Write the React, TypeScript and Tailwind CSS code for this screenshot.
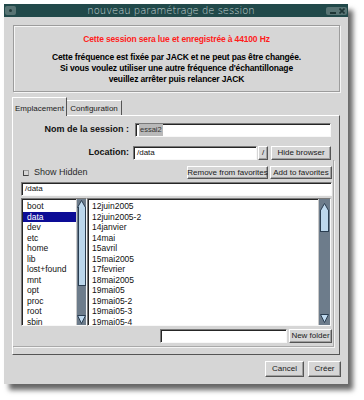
import React from "react";

const dirs = ["boot", "data", "dev", "etc", "home", "lib", "lost+found", "mnt", "opt", "proc", "root", "sbin"];
const files = [
  "12juin2005",
  "12juin2005-2",
  "14janvier",
  "14mai",
  "15avril",
  "15mai2005",
  "17fevrier",
  "18mai2005",
  "19mai05",
  "19mai05-2",
  "19mai05-3",
  "19mai05-4",
];

function Btn({ className = "", children }: { className?: string; children: React.ReactNode }) {
  return (
    <div
      className={`h-full shrink-0 flex items-center justify-center bg-[#d6d6d6] border border-t-white border-l-white border-r-[#555] border-b-[#555] shadow-[inset_-1px_-1px_0_#a0a0a0] text-[8px] text-[#1a1a1a] whitespace-nowrap ${className}`}
    >
      {children}
    </div>
  );
}

function Entry({ className = "", children }: { className?: string; children?: React.ReactNode }) {
  return (
    <div
      className={`h-full shrink-0 bg-white border border-t-[#7a7a7a] border-l-[#7a7a7a] border-r-[#f8f8f8] border-b-[#f8f8f8] shadow-[inset_1px_1px_0_#262626] flex items-center pl-[3px] text-[8px] text-[#111] overflow-hidden whitespace-nowrap ${className}`}
    >
      {children}
    </div>
  );
}

function UpArrow() {
  return (
    <svg width="9" height="8" viewBox="0 0 9 8" className="shrink-0">
      <polygon points="4.5,0.5 8.5,7.5 0.5,7.5" fill="#bfd9ee" stroke="#2a3d50" strokeWidth="1" />
    </svg>
  );
}

function DownArrow() {
  return (
    <svg width="9" height="9" viewBox="0 0 9 9" className="shrink-0">
      <polygon points="0.5,0.5 8.5,0.5 4.5,8.5" fill="#bfd9ee" stroke="#2a3d50" strokeWidth="1" />
    </svg>
  );
}

export default function App() {
  return (
    <div className="w-[364px] h-[400px] bg-white pl-[4px] pt-[4px] font-['Liberation_Sans',Arial,sans-serif] overflow-hidden">
      <div className="w-[344px] h-[380px] bg-[#d6d6d6] flex flex-col shadow-[5px_6px_5px_rgba(0,0,0,0.6)]">
        {/* Title bar */}
        <div className="h-[13px] shrink-0 bg-[#21494a] flex items-center">
          <div className="ml-[1px] w-[11px] h-[9px] rounded-[2px] bg-[#587474] flex items-center justify-center">
            <div className="w-[3px] h-[3px] rounded-full bg-[#233c3c]" />
          </div>
          <div className="flex-1 text-center font-['DejaVu_Sans',sans-serif] font-extralight text-[10px] leading-[13px] text-[#c5d3d3] whitespace-nowrap">
            nouveau paramétrage de session
          </div>
          <div className="mr-[1px] w-[21px] h-[8px] rounded-[2px] bg-[#587474] flex items-center justify-end pr-[2px] gap-[3px]">
            <svg width="6" height="6" viewBox="0 0 6 6">
              <rect x="0" y="4" width="6" height="2" fill="#1d3535" />
            </svg>
            <svg width="6" height="6" viewBox="0 0 6 6">
              <path d="M0.5 0.5 L5.5 5.5 M5.5 0.5 L0.5 5.5" stroke="#1d3535" strokeWidth="1.6" />
            </svg>
          </div>
        </div>

        {/* Info frame */}
        <div className="ml-[9px] mr-[8px] mt-[8px] h-[67px] shrink-0 border border-[#9c9c9c] shadow-[1px_1px_0_#f5f5f5,inset_1px_1px_0_#f5f5f5] flex flex-col items-center pt-[8px]">
          <div className="h-[11px] leading-[11px] text-[8.5px] font-bold tracking-[-0.15px] text-[#ff1c1c] whitespace-nowrap">
            Cette session sera lue et enregistrée à 44100 Hz
          </div>
          <div className="mt-[7px] flex flex-col items-center text-[8.5px] font-bold tracking-[-0.15px] text-black leading-[11px] whitespace-nowrap">
            <div>Cette fréquence est fixée par JACK et ne peut pas être changée.</div>
            <div>Si vous voulez utiliser une autre fréquence d'échantillonage</div>
            <div>veuillez arrêter puis relancer JACK</div>
          </div>
        </div>

        {/* Tabs */}
        <div className="ml-[8px] mt-[5px] h-[18px] shrink-0 flex items-end">
          <div className="relative z-10 -mb-[1px] h-[19px] w-[55px] bg-[#d6d6d6] border-t border-l border-t-white border-l-white border-r border-r-[#555] flex items-start justify-center pt-[5px] text-[8px] text-[#1a1a1a]">
            Emplacement
          </div>
          <div className="h-[15px] w-[55px] border-t border-t-white border-r border-r-[#555] flex items-start justify-center pt-[2px] text-[8px] text-[#1a1a1a]">
            Configuration
          </div>
        </div>

        {/* Notebook panel */}
        <div className="ml-[8px] w-[328px] h-[240px] shrink-0 border border-t-white border-l-white border-r-[#555] border-b-[#555] flex flex-col">
          {/* Row 1 */}
          <div className="mt-[7px] h-[14px] flex items-center">
            <div className="w-[116px] text-right text-[9px] font-bold text-[#111] whitespace-nowrap">Nom de la session :</div>
            <Entry className="ml-[6px] w-[196px]">
              <span className="bg-[#b9b9b9] text-[#333] px-[1px] text-[7.5px]">essai2</span>
            </Entry>
          </div>
          {/* Row 2 */}
          <div className="mt-[9px] h-[14px] flex items-center">
            <div className="w-[116px] text-right text-[9px] font-bold text-[#111] whitespace-nowrap">Location:</div>
            <Entry className="ml-[4px] w-[124px]">/data</Entry>
            <Btn className="ml-[1px] w-[10px]">/</Btn>
            <Btn className="ml-[3px] w-[60px]">Hide browser</Btn>
          </div>

          {/* Browser frame */}
          <div className="mr-[5px] pb-[3px] border-r border-b border-r-[#a9a9a9] border-b-[#a9a9a9] shadow-[1px_1px_0_#f4f4f4] flex flex-col">
            {/* Row 3 */}
            <div className="mt-[6px] h-[13px] flex items-center">
              <div className="ml-[10px] w-[6px] h-[6px] border border-l-[#444] border-b-[#444] border-t-[#9a9a9a] border-r-[#9a9a9a]" />
              <div className="ml-[5px] text-[9px] text-[#2a2a2a] whitespace-nowrap">Show Hidden</div>
              <div className="flex-1" />
              <Btn className="w-[81px]">Remove from favorites</Btn>
              <Btn className="ml-[2px] w-[62px] mr-[1px]">Add to favorites</Btn>
            </div>
            {/* Row 4 */}
            <div className="mt-[3px] h-[14px] pl-[8px] flex">
              <Entry className="w-[311px]">/data</Entry>
            </div>
            {/* Row 5 */}
            <div className="mt-[2px] h-[128px] pl-[8px] flex">
              <div className="w-[66px] h-full border border-t-[#7a7a7a] border-l-[#7a7a7a] border-r-[#f8f8f8] border-b-[#f8f8f8] flex">
                <div className="w-[54px] h-full bg-white border-t border-l border-[#262626] pt-[1px] overflow-hidden">
                  {dirs.map((d) => (
                    <div
                      key={d}
                      className={`h-[10.5px] leading-[10.5px] pl-[4px] text-[8.5px] whitespace-nowrap ${
                        d === "data" ? "bg-[#0c0c96] text-white" : "text-[#111]"
                      }`}
                    >
                      {d}
                    </div>
                  ))}
                </div>
                <div className="w-[10px] h-full bg-[#6d7c8b] border-l border-[#c9c9c9] flex flex-col items-center pt-[1px] pb-[1px]">
                  <UpArrow />
                  <div className="w-[8px] h-[79px] -mt-[1px] bg-[#bcd7ec] border border-t-0 border-[#2a3d50]" />
                  <div className="flex-1" />
                  <DownArrow />
                </div>
              </div>
              <div className="w-[244px] h-full border border-t-[#7a7a7a] border-l-[#7a7a7a] border-r-[#f8f8f8] border-b-[#f8f8f8] flex">
                <div className="w-[230px] h-full bg-white border-t border-l border-[#262626] pt-[1px] overflow-hidden">
                  {files.map((f) => (
                    <div key={f} className="h-[10.5px] leading-[10.5px] pl-[3px] text-[8.5px] text-[#111] whitespace-nowrap">
                      {f}
                    </div>
                  ))}
                </div>
                <div className="w-[12px] h-full bg-[#6d7c8b] border-l border-[#c9c9c9] flex flex-col items-center pt-[4px] pb-[2px]">
                  <UpArrow />
                  <div className="w-[9px] h-[22px] -mt-[1px] bg-[#bcd7ec] border border-t-0 border-[#2a3d50]" />
                  <div className="flex-1" />
                  <DownArrow />
                </div>
              </div>
            </div>
            {/* Row 6 */}
            <div className="mt-[3px] h-[14px] flex justify-end pr-[1px]">
              <Entry className="w-[127px]" />
              <Btn className="ml-[2px] w-[43px]">New folder</Btn>
            </div>
          </div>
          <div className="flex-1" />
        </div>

        {/* Bottom buttons */}
        <div className="mt-[6px] h-[16px] shrink-0 flex justify-end pr-[7px]">
          <Btn className="w-[39px] text-[8.5px]">Cancel</Btn>
          <Btn className="ml-[4px] w-[33px] text-[8.5px]">Créer</Btn>
        </div>
      </div>
    </div>
  );
}
